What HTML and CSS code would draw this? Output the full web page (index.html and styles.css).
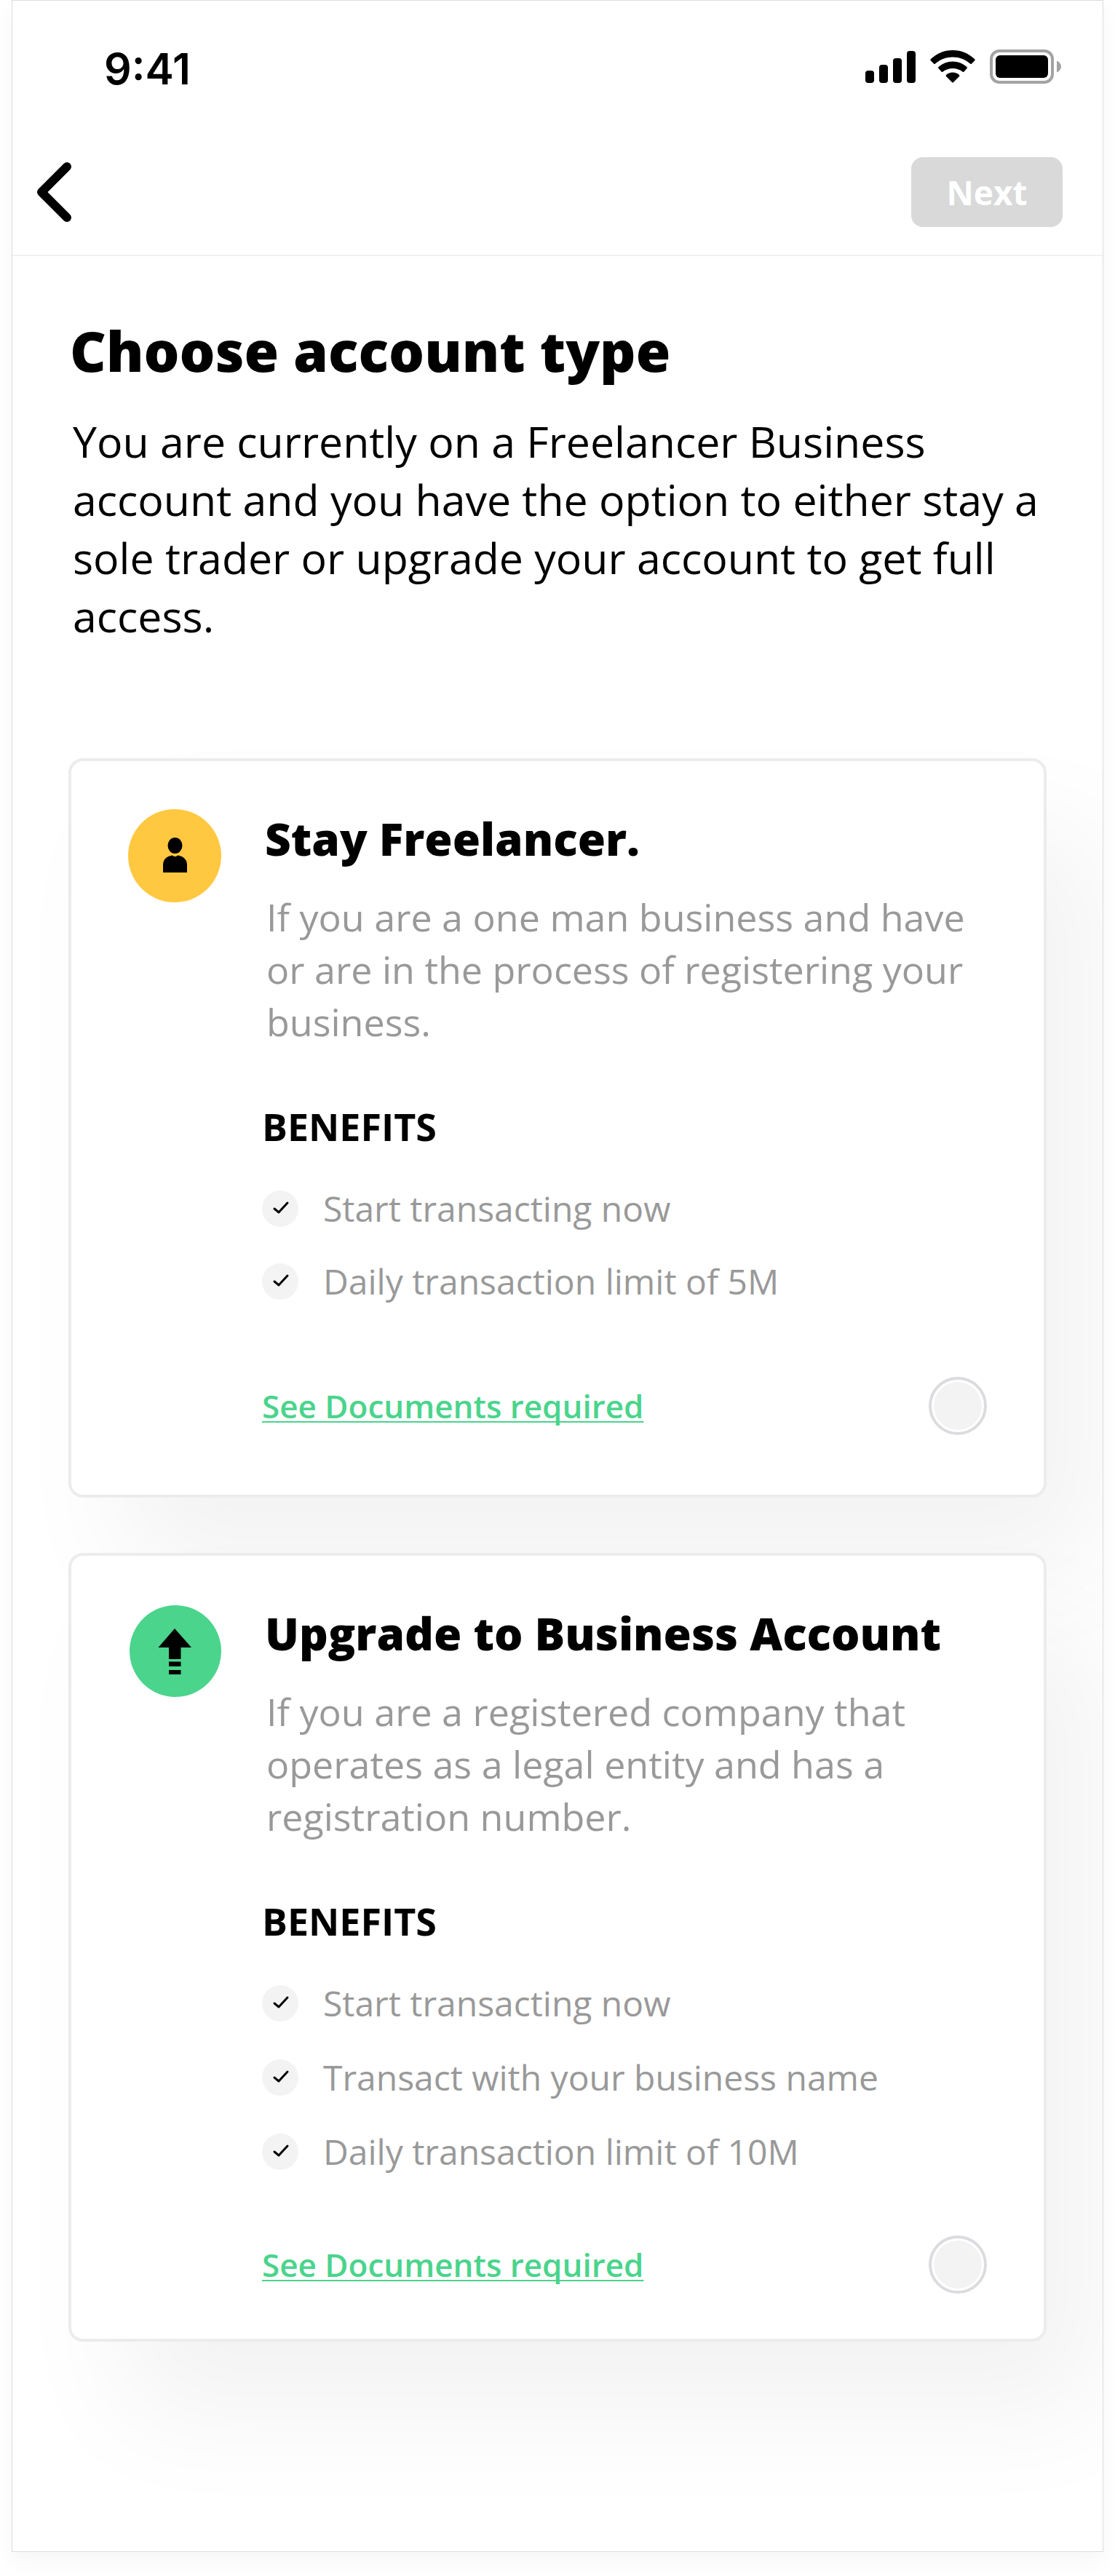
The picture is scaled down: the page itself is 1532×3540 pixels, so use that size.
FILE: index.html
```html
<!DOCTYPE html>
<html lang="en">
<head>
<meta charset="utf-8">
<meta name="viewport" content="width=device-width, initial-scale=1">
<title>Choose account type</title>
<link rel="stylesheet" href="styles.css">
</head>
<body>
<div class="screen">
  <div class="status-bar">
    <span class="status-time">9:41</span>
    <div class="status-icons">
      <svg width="69" height="48" viewBox="0 0 69 48" aria-hidden="true">
        <rect x="0" y="29" width="12" height="17" rx="4"/>
        <rect x="19" y="21" width="12" height="25" rx="4"/>
        <rect x="38" y="12" width="12" height="34" rx="4"/>
        <rect x="57" y="2" width="12" height="44" rx="4"/>
      </svg>
      <svg width="62" height="48" viewBox="0 0 62 48" aria-hidden="true">
        <path d="M31 1C43 1 53 5.500 61.500 13.500Q62 14.500 61 15.500L57 19.500Q56 20.500 55 19.500C48 13.500 40 10.500 31 10.500S14 13.500 7 19.500Q6 20.500 5 19.500L1 15.500Q0 14.500 .5 13.500C9 5.500 19 1 31 1Z"/>
        <path d="M31 16.500C38.500 16.500 45.500 19.500 50.500 24Q51.500 25 50.500 26L46.500 30.500Q45.500 31.500 44.500 30.500C40.500 27.500 36 26 31 26S21.500 27.500 17.500 30.500Q16.500 31.500 15.500 30.500L11.500 26Q10.500 25 11.500 24C16.500 19.500 23.500 16.500 31 16.500Z"/>
        <path d="M31 31.500C34.500 31.500 38 33 40 35Q41 36 40 37L32 45Q31 46 30 45L22 37Q21 36 22 35C24 33 27.500 31.500 31 31.500Z"/>
      </svg>
      <svg width="98" height="48" viewBox="0 0 98 48" aria-hidden="true">
        <rect x="2" y="2" width="84" height="43" rx="11" fill="none" stroke="#a3a3a3" stroke-width="4"/>
        <rect x="8" y="8" width="72" height="31" rx="6"/>
        <path d="M92 15.500C100 19 100 28 92 31.500Z" fill="#a3a3a3"/>
      </svg>
    </div>
  </div>

  <header class="nav-bar">
    <button class="back-button" type="button" aria-label="Back">
      <svg width="48" height="82" viewBox="0 0 48 82" aria-hidden="true">
        <path d="M42 6L7 41L42 76" fill="none" stroke="#000" stroke-width="12" stroke-linecap="round" stroke-linejoin="round"/>
      </svg>
    </button>
    <button class="next-button" type="button" disabled>Next</button>
  </header>

  <main class="content">
    <h1 class="page-title">Choose account type</h1>
    <p class="intro">You are currently on a Freelancer Business account and you have the option to either stay a sole trader or upgrade your account to get full access.</p>

    <form class="options">
      <section class="card">
        <svg class="card-icon" viewBox="0 0 128 128" aria-hidden="true">
          <circle cx="64" cy="64" r="64" fill="#ffc840"/>
          <ellipse cx="64.500" cy="50" rx="10" ry="11"/>
          <path d="M48 87V77C48 68 54 64.500 61 63.500Q64.500 66.500 68 63.500C75 64.500 81 68 81 77V87Z"/>
        </svg>
        <div class="card-body">
          <h2 class="card-title" id="freelancer-title">Stay Freelancer.</h2>
          <p class="card-text">If you are a one man business and have or are in the process of registering your business.</p>
          <h3 class="benefits-title">BENEFITS</h3>
          <ul class="benefits">
            <li class="benefit"><svg class="tick" viewBox="0 0 50 50" aria-hidden="true"><circle cx="25" cy="25" r="25"/><path d="M17 25L23 30L35 17"/></svg>Start transacting now</li>
            <li class="benefit"><svg class="tick" viewBox="0 0 50 50" aria-hidden="true"><circle cx="25" cy="25" r="25"/><path d="M17 25L23 30L35 17"/></svg>Daily transaction limit of 5M</li>
          </ul>
          <div class="card-footer">
            <a class="docs-link" href="#freelancer-documents">See Documents required</a>
            <input class="choice" type="radio" name="account" value="freelancer" aria-labelledby="freelancer-title">
          </div>
        </div>
      </section>

      <section class="card card-compact">
        <svg class="card-icon" viewBox="0 0 128 128" aria-hidden="true">
          <circle cx="65" cy="65" r="63" fill="#4ad48c"/>
          <path d="M64 34L87 60H72.500V76H56V60H41.500ZM56 79.500H72.500V86H56ZM56 91H72.500V97H56Z"/>
        </svg>
        <div class="card-body">
          <h2 class="card-title" id="business-title">Upgrade to Business Account</h2>
          <p class="card-text">If you are a registered company that operates as a legal entity and has a registration number.</p>
          <h3 class="benefits-title">BENEFITS</h3>
          <ul class="benefits">
            <li class="benefit"><svg class="tick" viewBox="0 0 50 50" aria-hidden="true"><circle cx="25" cy="25" r="25"/><path d="M17 25L23 30L35 17"/></svg>Start transacting now</li>
            <li class="benefit"><svg class="tick" viewBox="0 0 50 50" aria-hidden="true"><circle cx="25" cy="25" r="25"/><path d="M17 25L23 30L35 17"/></svg>Transact with your business name</li>
            <li class="benefit"><svg class="tick" viewBox="0 0 50 50" aria-hidden="true"><circle cx="25" cy="25" r="25"/><path d="M17 25L23 30L35 17"/></svg>Daily transaction limit of 10M</li>
          </ul>
          <div class="card-footer">
            <a class="docs-link" href="#business-documents">See Documents required</a>
            <input class="choice" type="radio" name="account" value="business" aria-labelledby="business-title">
          </div>
        </div>
      </section>
    </form>
  </main>
</div>
</body>
</html>
```
FILE: styles.css
```css
* {
  box-sizing: border-box;
}

body {
  margin: 0;
  padding: 0 16px 32px;
  background: #fff;
  color: #000;
  font-family: "Open Sans", "Noto Sans", sans-serif;
}

h1, h2, h3, p, ul {
  margin: 0;
  padding: 0;
}

button {
  border: 0;
  padding: 0;
  font-family: inherit;
}

.screen {
  overflow: hidden;
  border: 1px solid #dcdcdc;
  background: #fff;
  box-shadow: 0 12px 28px rgba(0, 0, 0, 0.04);
}

.status-bar {
  display: flex;
  justify-content: space-between;
  align-items: flex-start;
  padding: 58px 57px 0 126px;
}

.status-time {
  font-family: Inter, sans-serif;
  font-size: 59px;
  font-weight: 600;
  line-height: 72px;
}

.status-icons {
  display: flex;
  gap: 20px;
  padding-top: 9px;
}

.nav-bar {
  display: flex;
  justify-content: space-between;
  align-items: center;
  margin-top: 85px;
  padding: 0 55px 38px 33px;
  border-bottom: 2px solid #f1f1f1;
}

.back-button {
  display: flex;
  background: none;
}

.next-button {
  width: 208px;
  height: 96px;
  border-radius: 16px;
  background: #d9d9d9;
  color: #fff;
  font-size: 46px;
  font-weight: 700;
}

.content {
  padding: 80px 77px 288px;
}

.page-title {
  padding-left: 2px;
  font-size: 77px;
  font-weight: 800;
  line-height: 100px;
}

.intro {
  margin-top: 34px;
  padding-left: 6px;
  font-size: 59px;
  line-height: 80px;
}

.options {
  display: grid;
  gap: 76px;
  margin-top: 156px;
}

.card {
  display: flex;
  align-items: flex-start;
  gap: 56px;
  padding: 66px 78px 82px;
  border: 4px solid #ebeced;
  border-radius: 20px;
  background: #fff;
  box-shadow: 72px 100px 160px rgba(0, 0, 0, 0.05);
}

.card-icon {
  flex: none;
  width: 128px;
  height: 128px;
}

.card-body {
  flex: 1;
}

.card-title {
  padding-left: 4px;
  font-size: 62px;
  font-weight: 800;
  line-height: 80px;
}

.card-text {
  margin-top: 32px;
  padding-left: 6px;
  color: #999;
  font-size: 52px;
  line-height: 72px;
}

.benefits-title {
  margin-top: 76px;
  font-size: 52px;
  font-weight: 700;
  line-height: 64px;
}

.benefits {
  display: grid;
  gap: 40px;
  margin-top: 51px;
  list-style: none;
}

.benefit {
  display: flex;
  align-items: center;
  gap: 34px;
  color: #999;
  font-size: 48px;
  line-height: 60px;
}

.tick {
  flex: none;
  width: 50px;
  height: 50px;
  fill: #f3f3f3;
}

.tick path {
  fill: none;
  stroke: #000;
  stroke-width: 3;
  stroke-linecap: round;
  stroke-linejoin: round;
}

.card-footer {
  display: flex;
  justify-content: space-between;
  align-items: center;
  margin-top: 101px;
}

.docs-link {
  color: #4ad48c;
  font-size: 44px;
  font-weight: 600;
  text-decoration-thickness: 2px;
  text-underline-offset: 4px;
  text-decoration-skip-ink: none;
}

.choice {
  appearance: none;
  flex: none;
  width: 80px;
  height: 80px;
  margin: 0;
  padding: 3px;
  border: 4px solid #dbdce0;
  border-radius: 50%;
  background: #f3f3f3 content-box;
}

.choice:checked {
  background-color: #4ad48c;
}

.card-compact {
  padding-bottom: 62px;
}

.card-compact .benefits {
  gap: 42px;
}

.card-compact .card-footer {
  margin-top: 85px;
}
```
